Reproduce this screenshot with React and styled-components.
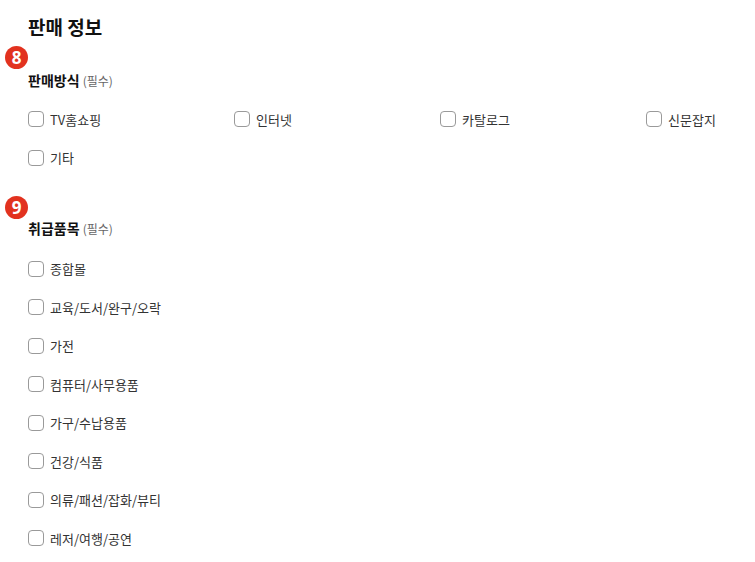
import React from 'react';
import styled, { createGlobalStyle } from 'styled-components';

const GlobalStyle = createGlobalStyle`
  body {
    margin: 0;
    background: #ffffff;
    overflow: hidden;
    font-family: "Noto Sans CJK KR", "Noto Sans", sans-serif;
    color: #222222;
  }
`;

const Page = styled.div`
  padding: 13px 0 0 28px;
  width: 755px;
  box-sizing: border-box;
`;

const Title = styled.h2`
  margin: 0;
  font-size: 19px;
  line-height: 27px;
  font-weight: 700;
  color: #111111;
`;

const Section = styled.section`
  margin-top: ${(props) => props.$top}px;
`;

const Badge = styled.div`
  width: 23px;
  height: 23px;
  margin-left: -23px;
  border-radius: 50%;
  background: #e2321f;
  color: #ffffff;
  font-size: 17px;
  font-weight: 700;
  line-height: 23px;
  text-align: center;
  font-family: "Noto Sans", "Liberation Sans", sans-serif;
`;

const Label = styled.div`
  margin-top: ${(props) => props.$gap}px;
  font-size: 14px;
  line-height: 20px;
  font-weight: 700;
  color: #111111;

  span {
    font-size: 12px;
    font-weight: 400;
    color: #666666;
  }
`;

const Options = styled.div`
  display: grid;
  grid-template-columns: ${(props) =>
    props.$cols > 1 ? `repeat(${props.$cols - 1}, 206px) auto` : 'auto'};
  row-gap: 16.5px;
  margin-top: ${(props) => props.$gap}px;
`;

const Option = styled.label`
  display: flex;
  align-items: center;
  height: 22px;
  font-size: 13px;
  color: #333333;
  white-space: nowrap;
`;

const Box = styled.span`
  width: 16px;
  height: 16px;
  box-sizing: border-box;
  border: 1.5px solid #9a9a9a;
  border-radius: 4px;
  margin-right: 6px;
  flex-shrink: 0;
`;

const methods = ['TV홈쇼핑', '인터넷', '카탈로그', '신문잡지', '기타'];
const items = [
  '종합몰',
  '교육/도서/완구/오락',
  '가전',
  '컴퓨터/사무용품',
  '가구/수납용품',
  '건강/식품',
  '의류/패션/잡화/뷰티',
  '레저/여행/공연',
];

const Group = ({ num, title, list, cols, top, labelGap, listGap }) => (
  <Section $top={top}>
    <Badge>{num}</Badge>
    <Label $gap={labelGap}>
      {title} <span>(필수)</span>
    </Label>
    <Options $cols={cols} $gap={listGap}>
      {list.map((item) => (
        <Option key={item}>
          <Box />
          {item}
        </Option>
      ))}
    </Options>
  </Section>
);

export default function App() {
  return (
    <Page>
      <GlobalStyle />
      <Title>판매 정보</Title>
      <Group
        num="8"
        title="판매방식"
        list={methods}
        cols={4}
        top={6}
        labelGap={1}
        listGap={17}
      />
      <Group
        num="9"
        title="취급품목"
        list={items}
        cols={1}
        top={27}
        labelGap={-1}
        listGap={19}
      />
    </Page>
  );
}
